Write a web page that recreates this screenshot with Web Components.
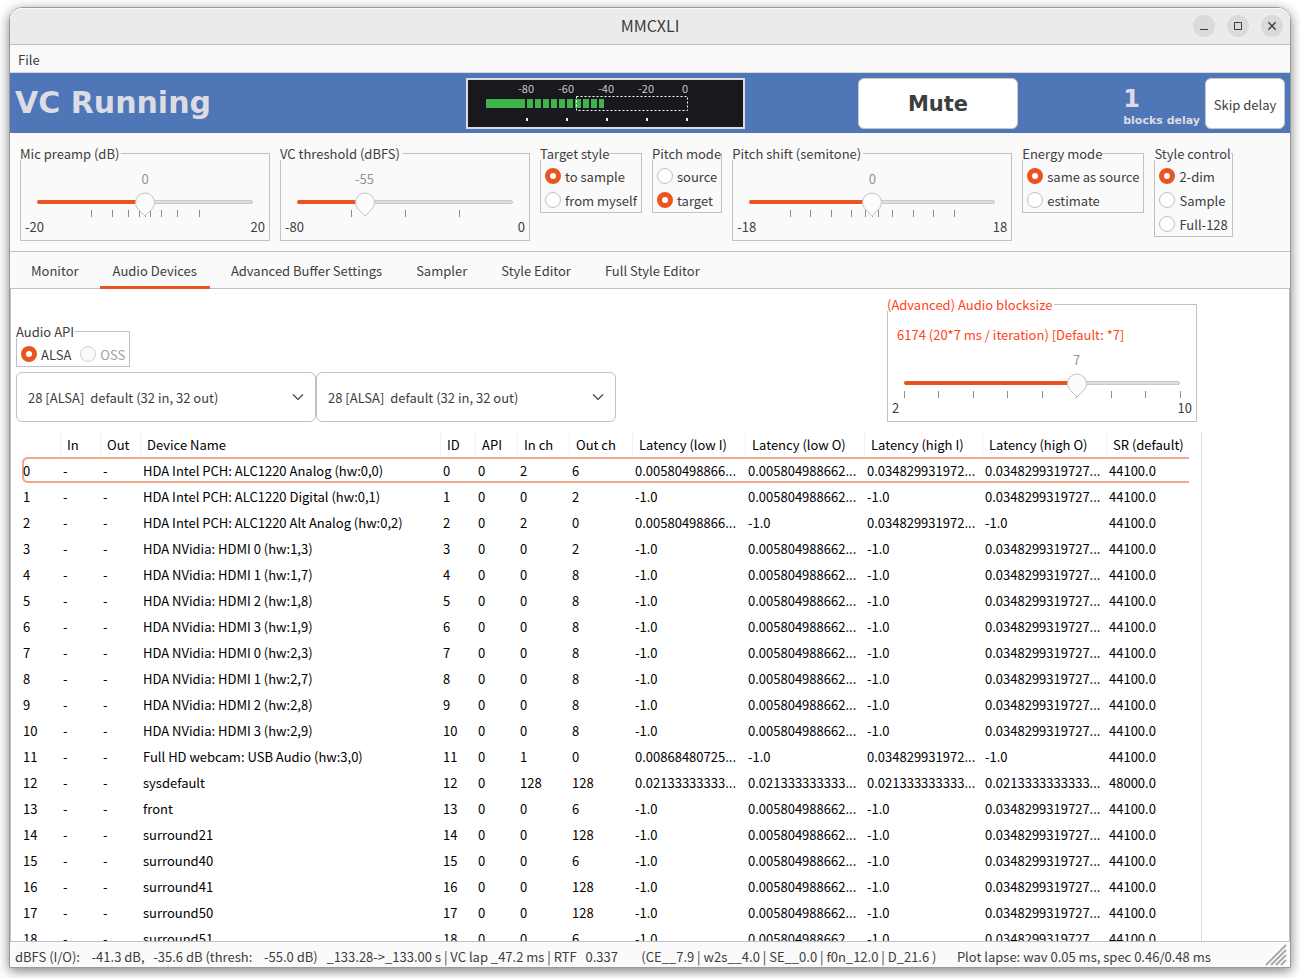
<!DOCTYPE html>
<html lang="en">
<head>
<meta charset="utf-8">
<title>MMCXLI</title>
<style>
  html, body { margin: 0; height: 100%; }
  body {
    box-sizing: border-box;
    padding-top: 7px;
    background: #fff;
    color: #3d3d3d;
    font: 13px/18px "Noto Sans CJK JP", "Noto Sans", sans-serif;
    --line: #c1c1c1;
    --accent: #e95420;
    --face: #fafafa;
    overflow: hidden;
  }
</style>
</head>
<body>
<app-window></app-window>

<script>
const define = (name, html, setup) => {
  const tpl = document.createElement('template');
  tpl.innerHTML = html;
  customElements.define(name, class extends HTMLElement {
    constructor() {
      super();
      this.attachShadow({ mode: 'open' }).append(tpl.content.cloneNode(true));
    }
    connectedCallback() {
      if (setup && !this.ready) { this.ready = true; setup(this, this.shadowRoot); }
    }
  });
};

/* ---------- title bar ---------- */
define('title-bar', `
<style>
  :host { display: grid; grid-template-columns: 1fr auto 1fr; align-items: center; height: 36px;
    background: #ebebeb; border-bottom: 1px solid #bfbfbf; border-radius: 12px 12px 0 0; box-shadow: inset 0 1px #f9f9f9; }
  h1 { grid-column: 2; margin: 0; font-size: 16px; font-weight: 400; line-height: 18px; padding-bottom: 2px; }
  div { display: flex; justify-content: flex-end; gap: 12px; padding-right: 7px; }
  button { width: 22px; height: 22px; border: 0; padding: 0; border-radius: 50%; background: #dadada; }
  svg { display: block; fill: none; stroke: #3d3d3d; }
</style>
<h1><slot></slot></h1>
<div>
  <button aria-label="Minimize"><svg width="22" height="22"><path d="M7 14.500h8"/></svg></button>
  <button aria-label="Maximize"><svg width="22" height="22"><path d="M7.500 7.500h7v7h-7z"/></svg></button>
  <button aria-label="Close"><svg width="22" height="22"><path stroke-width="1.400" d="M7.300 7.300l7.400 7.400M14.700 7.300l-7.400 7.400"/></svg></button>
</div>`);

/* ---------- menu bar ---------- */
define('menu-bar', `
<style>
  :host { display: flex; align-items: center; height: 27px; padding-left: 8px; background: var(--face); border-bottom: 1px solid #d8d8d8; }
  button { border: 0; background: none; padding: 2px 0 0; font: inherit; color: inherit; }
</style>
<button><slot></slot></button>`);

/* ---------- input level meter ---------- */
define('level-meter', `
<style>
  :host { display: block; box-sizing: border-box; border: 2px solid #dcdce0; background: #18181e; }
  svg { display: block; }
  text { font-size: 11px; fill: #c8c8cc; text-anchor: middle; }
</style>
<svg width="275" height="45" role="img" aria-label="Input level"></svg>`, (el, root) => {
  let s = '<path fill="#3fb44b" d="M18 19h39v9h-39z';
  for (let x = 59; x < 131; x += 8) s += `M${x} 19h6v9h-6z`;
  s += 'M131 19h5v9h-5z"/>';
  [-80, -60, -40, -20, 0].forEach((v, i) => {
    const x = 58 + i * 40;
    s += `<text x="${v ? x : x - 1}" y="13">${v}</text><path fill="#eee" d="M${x} 38h2v3h-2z"/>`;
  });
  s += '<rect x="108.500" y="16.500" width="111" height="14" fill="none" stroke="#fff" stroke-dasharray="2 2"/>';
  root.querySelector('svg').innerHTML = s;
});

/* ---------- blue status banner ---------- */
define('status-banner', `
<style>
  :host { display: grid; grid-template-columns: 450fr 279px 113fr 160px 105fr auto 80px; box-sizing: border-box;
    height: 60px; padding: 5px; background: #4f76b7; color: #dcdce4; }
  h2, .delay { margin: 0; font-family: "DejaVu Sans", sans-serif; font-weight: 700; }
  h2 { font-size: 30px; line-height: 50px; }
  button { border: 1px solid #c9c6c3; border-radius: 6px; background: #fff; color: #3d3d3d; padding: 0; }
  .mute { grid-column: 4; font: 700 21px/24px "DejaVu Sans", sans-serif; }
  .skip { grid-column: 7; font: inherit; padding-top: 2px; }
  .delay { grid-column: 6; padding: 7px 5px 0 0; }
  .n { font-size: 24px; line-height: 28px; }
  .u { font-size: 11px; line-height: 16px; }
</style>
<h2>VC Running</h2>
<level-meter></level-meter>
<button class="mute">Mute</button>
<div class="delay"><div class="n">1</div><div class="u">blocks delay</div></div>
<button class="skip">Skip delay</button>`);

/* ---------- range slider with value, ticks and end labels ---------- */
define('range-slider', `
<style>
  :host { display: block; }
  .value { display: flex; margin: 0 16px; color: #929292; }
  .value span { width: 0; display: flex; justify-content: center; white-space: nowrap; }
  .stack { display: grid; margin: 4px 6px 0; height: 26px; }
  .stack > * { grid-area: 1 / 1; }
  .track { box-sizing: border-box; height: 4px; margin: 8px 10px 0; border: 1px solid #cacaca; border-radius: 2px; background: #dedede; }
  .fill { height: 4px; margin: -1px; border-radius: 2px; background: var(--accent); }
  .ticks { margin: 18px 10px 0; width: calc(100% - 20px); height: 7px; overflow: visible; stroke: #8b8b8b; shape-rendering: crispEdges; }
  input { appearance: none; width: 100%; height: 25px; margin: 0; background: none; }
  input::-webkit-slider-thumb { appearance: none; width: 20px; height: 25px; border: 0;
    background: url("data:image/svg+xml,%3Csvg xmlns='http://www.w3.org/2000/svg' width='20' height='25'%3E%3Cpath d='M10 24L3 17Q.5 14 .5 10.500A9.500 9.500 0 0 1 19.500 10.500Q19.500 14 17 17Z' fill='%23fcfcfc' stroke='%23c6c2be'/%3E%3C/svg%3E") no-repeat; }
  .ends { display: flex; justify-content: space-between; padding: 0 4px 4px; }
</style>
<div class="value"><span></span></div>
<div class="stack">
  <div class="track"><div class="fill"></div></div>
  <svg class="ticks"></svg>
  <input type="range">
</div>
<div class="ends"><span></span><span></span></div>`, (el, root) => {
  const min = +el.getAttribute('min'), max = +el.getAttribute('max');
  const input = root.querySelector('input');
  const pct = v => (v - min) / (max - min) * 100 + '%';
  input.min = min; input.max = max; input.value = el.getAttribute('value');
  input.setAttribute('aria-label', el.getAttribute('label'));
  const ends = root.querySelectorAll('.ends span');
  ends[0].textContent = min; ends[1].textContent = max;
  root.querySelector('.ticks').innerHTML = el.getAttribute('ticks').split(' ')
    .map(t => `<line x1="${pct(+t)}" x2="${pct(+t)}" y1="0" y2="7"/>`).join('');
  const show = () => {
    const label = root.querySelector('.value span');
    label.textContent = input.value;
    label.style.marginLeft = pct(+input.value);
    root.querySelector('.fill').style.width = pct(+input.value);
  };
  input.addEventListener('input', show);
  show();
});

/* ---------- titled frame ---------- */
const frameStyle = `
  fieldset { margin: 0; padding: 0; border: 1px solid var(--line); min-width: 0; }
  legend { margin-left: -1px; padding: 0 2px 0 0; height: 14px; line-height: 16px; white-space: nowrap; background: var(--face); }`;
define('group-frame', `
<style>
  :host { display: block; }
  ${frameStyle}
</style>
<fieldset><legend></legend><slot></slot></fieldset>`, (el, root) => {
  root.querySelector('legend').textContent = el.getAttribute('label');
});

/* ---------- radio group ---------- */
define('radio-group', `
<style>
  :host { display: block; }
  ${frameStyle}
  legend { padding: 0; }
  .list { display: flex; flex-direction: column; padding: 4px 4px 0; }
  :host([row]) .list { flex-direction: row; gap: 9px; }
  label { display: flex; align-items: center; gap: 4px; height: 24px; white-space: nowrap; }
  label span { padding-top: 2px; }
  input { appearance: none; flex: none; box-sizing: border-box; width: 16px; height: 16px; margin: 0; border: 1px solid #c2bfbc; border-radius: 50%; background: #fff; }
  input:checked { border: 5px solid var(--accent); }
  label.off { color: #a0a0a0; }
  .off input { border-color: #d2d0ce; background: #fafafa; }
</style>
<fieldset><legend></legend><div class="list"></div></fieldset>`, (el, root) => {
  root.querySelector('legend').textContent = el.getAttribute('label');
  const off = el.getAttribute('disabled-option');
  root.querySelector('.list').innerHTML = el.getAttribute('options').split('|').map(o =>
    `<label class="${o === off ? 'off' : ''}"><input type="radio" name="choice" ${o === el.getAttribute('value') ? 'checked' : ''} ${o === off ? 'disabled' : ''}><span>${o}</span></label>`).join('');
});

/* ---------- settings row ---------- */
define('control-row', `
<style>
  :host { display: flex; align-items: flex-start; gap: 10px; box-sizing: border-box; height: 118px; padding: 13px 10px 0; background: var(--face); }
  range-slider { padding-top: 10px; }
  .w250 { width: 250px; }
  .w280 { width: 280px; }
</style>
<group-frame class="w250" label="Mic preamp (dB)"><range-slider label="Mic preamp" min="-20" max="20" value="0" ticks="-10 -6 -3 -1 0 1 3 6 10"></range-slider></group-frame>
<group-frame class="w250" label="VC threshold (dBFS)"><range-slider label="VC threshold" min="-80" max="0" value="-55" ticks="-60 -40 -20"></range-slider></group-frame>
<radio-group label="Target style" options="to sample|from myself" value="to sample"></radio-group>
<radio-group label="Pitch mode" options="source|target" value="target"></radio-group>
<group-frame class="w280" label="Pitch shift (semitone)"><range-slider label="Pitch shift" min="-18" max="18" value="0" ticks="-12 -9 -6 -3 -1 0 1 3 6 9 12"></range-slider></group-frame>
<radio-group label="Energy mode" options="same as source|estimate" value="same as source"></radio-group>
<radio-group label="Style control" options="2-dim|Sample|Full-128" value="2-dim"></radio-group>`);

/* ---------- tabs ---------- */
define('tab-bar', `
<style>
  :host { display: flex; gap: 8px; height: 36px; padding-left: 8px; background: var(--face);
    border-top: 1px solid var(--line); border-bottom: 1px solid var(--line); }
  button { height: 37px; border: 0; border-bottom: 3px solid transparent; background: none; padding: 4px 13px 0; font: inherit; color: inherit; white-space: nowrap; }
  button[aria-selected=true] { border-color: var(--accent); }
</style>
<button role="tab">Monitor</button>
<button role="tab" aria-selected="true">Audio Devices</button>
<button role="tab">Advanced Buffer Settings</button>
<button role="tab">Sampler</button>
<button role="tab">Style Editor</button>
<button role="tab">Full Style Editor</button>`);

/* ---------- device drop-down ---------- */
define('device-picker', `
<style>
  :host { display: grid; width: 300px; height: 50px; }
  select, svg { grid-area: 1 / 1; }
  select { appearance: none; border: 1px solid var(--line); border-radius: 6px; background: #fff; padding: 2px 30px 0 11px; font: inherit; color: inherit; }
  svg { place-self: center end; margin-right: 12px; pointer-events: none; fill: none; stroke: #3d3d3d; stroke-width: 1.100; }
</style>
<select><option></option></select>
<svg width="12" height="8"><path d="M1 1.500l5 5 5-5"/></svg>`, (el, root) => {
  root.querySelector('option').textContent = el.getAttribute('value').replace(/  /g, '\u00a0 ');
  root.querySelector('select').setAttribute('aria-label', el.getAttribute('label'));
});

/* ---------- device table ---------- */
define('device-table', `
<style>
  :host { display: block; padding: 0 12px 0 6px; border-right: 1px solid #dcdcdc; color: #000; }
  table { border-collapse: separate; border-spacing: 0; table-layout: fixed; width: 1167px; }
  th, td { box-sizing: border-box; height: 26px; padding: 2px 0 0 3px; text-align: left; font-weight: 400; white-space: nowrap; line-height: 20px; }
  th { height: 25px; padding: 0 0 0 6px; border-left: 1px solid #f3f3f3; }
  th:first-child { border: 0; }
  td:first-child { padding-left: 1px; }
  .focus td { box-shadow: inset 0 2px #f3a78e, inset 0 -2px #f3a78e; }
  .focus td:first-child { box-shadow: inset 2px 0 #f3a78e, inset 0 2px #f3a78e, inset 0 -2px #f3a78e; border-radius: 6px 0 0 6px; }
</style>
<table><colgroup></colgroup><thead><tr></tr></thead><tbody></tbody></table>`, (el, root) => {
  const widths = [38, 40, 40, 300, 35, 42, 52, 63, 113, 119, 118, 124, 83];
  const heads = ['', 'In', 'Out', 'Device Name', 'ID', 'API', 'In ch', 'Out ch', 'Latency (low I)', 'Latency (low O)', 'Latency (high I)', 'Latency (high O)', 'SR (default)'];
  const none = '-1.0', lo = '0.005804988662...', hi = '0.0348299319727...';
  const out = (name, ch) => [name, 0, ch, none, lo, none, hi, '44100.0'];
  const rows = [
    ['HDA Intel PCH: ALC1220 Analog (hw:0,0)', 2, 6, '0.00580498866...', lo, '0.034829931972...', hi, '44100.0'],
    out('HDA Intel PCH: ALC1220 Digital (hw:0,1)', 2),
    ['HDA Intel PCH: ALC1220 Alt Analog (hw:0,2)', 2, 0, '0.00580498866...', none, '0.034829931972...', none, '44100.0'],
    out('HDA NVidia: HDMI 0 (hw:1,3)', 2),
    out('HDA NVidia: HDMI 1 (hw:1,7)', 8),
    out('HDA NVidia: HDMI 2 (hw:1,8)', 8),
    out('HDA NVidia: HDMI 3 (hw:1,9)', 8),
    out('HDA NVidia: HDMI 0 (hw:2,3)', 8),
    out('HDA NVidia: HDMI 1 (hw:2,7)', 8),
    out('HDA NVidia: HDMI 2 (hw:2,8)', 8),
    out('HDA NVidia: HDMI 3 (hw:2,9)', 8),
    ['Full HD webcam: USB Audio (hw:3,0)', 1, 0, '0.00868480725...', none, '0.034829931972...', none, '44100.0'],
    ['sysdefault', 128, 128, '0.02133333333...', '0.021333333333...', '0.021333333333...', '0.0213333333333...', '48000.0'],
    out('front', 6), out('surround21', 128), out('surround40', 6), out('surround41', 128), out('surround50', 128), out('surround51', 6)
  ];
  root.querySelector('colgroup').innerHTML = widths.map(w => `<col style="width:${w}px">`).join('');
  root.querySelector('thead tr').innerHTML = heads.map(h => `<th scope="col">${h}</th>`).join('');
  root.querySelector('tbody').innerHTML = rows.map(([name, ...rest], i) =>
    `<tr class="${i ? '' : 'focus'}">` + [i, '-', '-', name, i, 0, ...rest].map(c => `<td>${c}</td>`).join('') + '</tr>').join('');
});

/* ---------- audio devices page ---------- */
define('devices-page', `
<style>
  :host { display: flex; flex: 1; min-height: 0; overflow: hidden; padding: 8px 0 0 5px; --face: #fff; background: #fff;
    border: solid var(--line); border-width: 0 1px; }
  .panel { display: flex; flex-direction: column; gap: 10px; }
  .top { display: flex; justify-content: space-between; align-items: flex-end; padding-right: 5px; }
  .left { display: flex; flex-direction: column; align-items: flex-start; gap: 5px; }
  .pickers { display: flex; }
  group-frame { width: 310px; }
  .size { color: #ff4419; }
  p { margin: 0; padding: 15px 9px 7px; color: #ff4419; }
  range-slider { color: #3d3d3d; }
</style>
<div class="panel">
  <div class="top">
    <div class="left">
      <radio-group row label="Audio API" options="ALSA|OSS" value="ALSA" disabled-option="OSS"></radio-group>
      <div class="pickers">
        <device-picker label="Input device" value="28 [ALSA]  default (32 in, 32 out)"></device-picker>
        <device-picker label="Output device" value="28 [ALSA]  default (32 in, 32 out)"></device-picker>
      </div>
    </div>
    <group-frame class="size" label="(Advanced) Audio blocksize">
      <p>6174 (20*7 ms / iteration) [Default: *7]</p>
      <range-slider label="Audio blocksize" min="2" max="10" value="7" ticks="2 3 4 5 6 7 8 9 10"></range-slider>
    </group-frame>
  </div>
  <device-table></device-table>
</div>`);

/* ---------- status bar ---------- */
define('status-bar', `
<style>
  :host { display: flex; justify-content: space-between; align-items: center; flex: none; height: 25px; padding: 0 3px 0 5px;
    background: var(--face); border-top: 1px solid var(--line); white-space: pre; }
  span { padding-top: 4px; }
  svg { display: block; stroke: #a6a6a6; stroke-width: 1.800; }
</style>
<span><slot></slot></span>
<svg width="22" height="22"><path d="M1 21L21 1M6 21L21 6M11 21L21 11M16 21L21 16"/></svg>`);

/* ---------- window ---------- */
define('app-window', `
<style>
  :host { display: flex; flex-direction: column; box-sizing: border-box; height: calc(100vh - 17px); margin: 0 9px;
    border: 1px solid #9a9a9a; border-radius: 13px 13px 0 0; box-shadow: 0 3px 12px rgba(0, 0, 0, .5); }
  title-bar, menu-bar, status-banner, control-row, tab-bar { flex: none; }
</style>
<title-bar>MMCXLI</title-bar>
<menu-bar>File</menu-bar>
<status-banner></status-banner>
<control-row></control-row>
<tab-bar></tab-bar>
<devices-page></devices-page>
<status-bar>dBFS (I/O):    -41.3 dB,   -35.6 dB (thresh:    -55.0 dB)   _133.28-&gt;_133.00 s | VC lap _47.2 ms | RTF   0.337        (CE__7.9 | w2s__4.0 | SE__0.0 | f0n_12.0 | D_21.6 )       Plot lapse: wav 0.05 ms, spec 0.46/0.48 ms</status-bar>`);
</script>
</body>
</html>
